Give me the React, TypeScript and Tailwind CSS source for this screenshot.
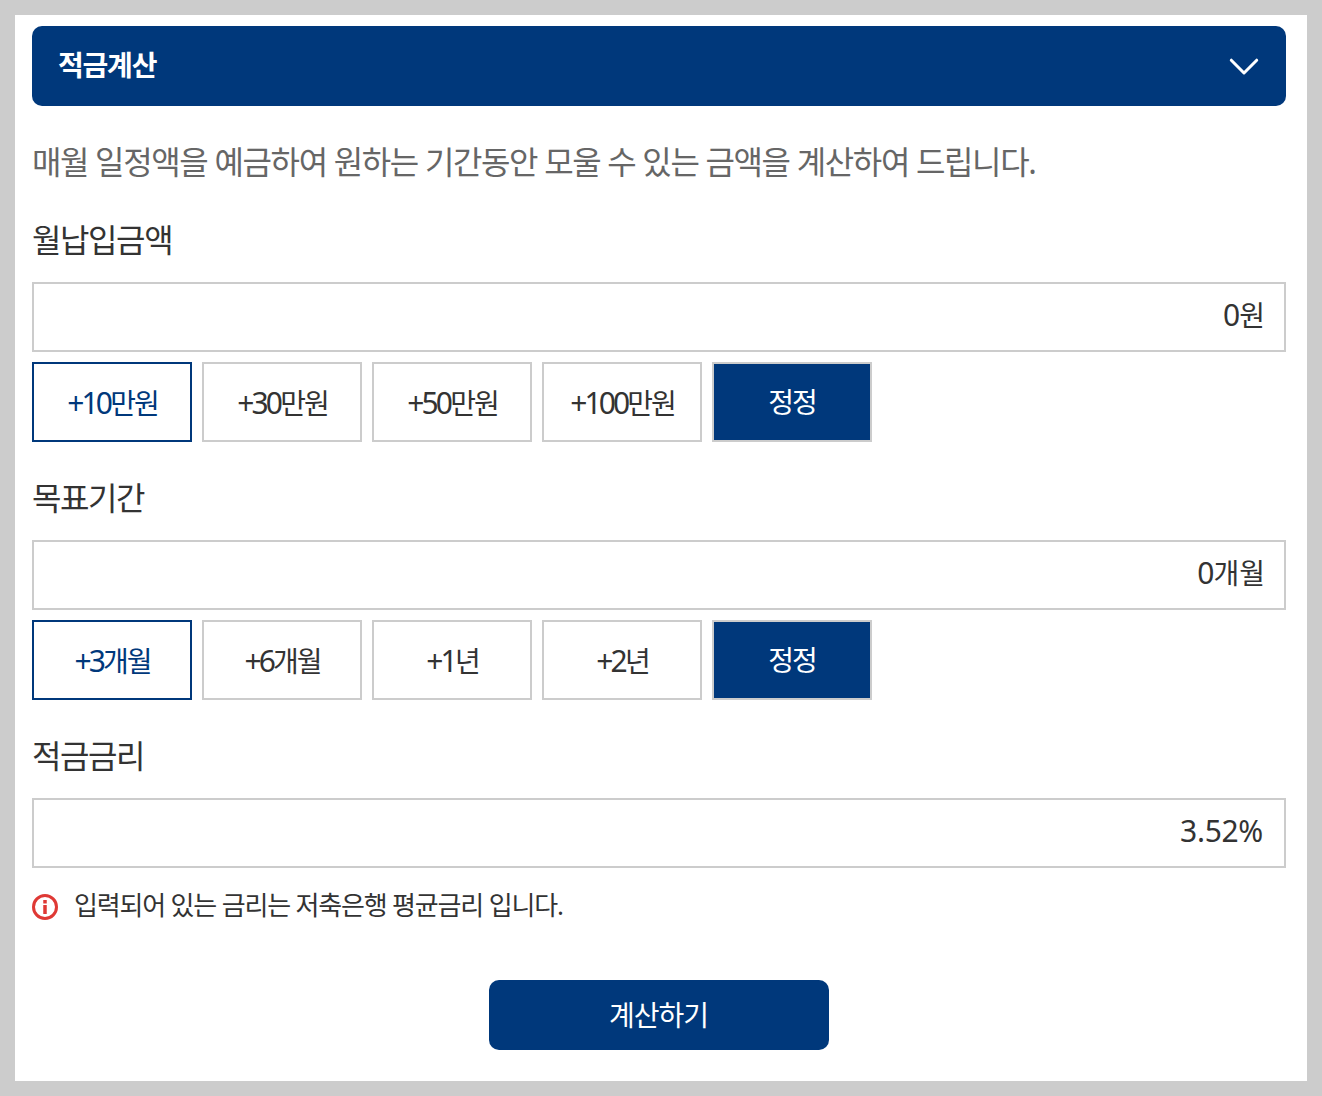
import { useState } from "react";

type FieldProps = {
  label: string;
  amount: string;
  unit?: string;
  options?: { amount: string; unit: string }[];
};

const Field = ({ label, amount, unit, options }: FieldProps) => {
  const [active, setActive] = useState(0);

  return (
    <section>
      <h2 className="h-[68px] pt-[6px] text-[32px] leading-[40px] tracking-[-1.4px] text-[#333]">{label}</h2>
      <div className="flex h-[70px] items-center justify-end border-2 border-[#ccc] pr-[19px] pb-[6px] text-[28px] text-[#333]">
        <span className={unit ? "" : "pr-[2px]"}>
          <span className={unit ? "text-[30px] tracking-[-1px]" : "text-[30px] tracking-[-0.3px]"}>{amount}</span>
          {unit}
        </span>
      </div>
      {options && (
        <div className="mt-[10px] flex gap-[10px]">
          {options.map((option, index) => (
            <button
              key={option.amount}
              type="button"
              onClick={() => setActive(index)}
              className={`h-20 w-40 border-2 pl-[1px] text-[28px] tracking-[-2px] ${
                index === active ? "border-[#00387b] text-[#00387b]" : "border-[#ccc] text-[#333]"
              }`}
            >
              <span className="text-[30px] tracking-[-2.9px]">{option.amount}</span>
              {option.unit}
            </button>
          ))}
          <button type="button" className="h-20 w-40 border-2 border-[#ccc] bg-[#00387b] text-[28px] tracking-[-2px] text-white">
            정정
          </button>
        </div>
      )}
    </section>
  );
};

const amountOptions = [
  { amount: "+10", unit: "만원" },
  { amount: "+30", unit: "만원" },
  { amount: "+50", unit: "만원" },
  { amount: "+100", unit: "만원" },
];

const periodOptions = [
  { amount: "+3", unit: "개월" },
  { amount: "+6", unit: "개월" },
  { amount: "+1", unit: "년" },
  { amount: "+2", unit: "년" },
];

export default function App() {
  return (
    <div className="h-[1096px] w-[1322px] bg-[#ccc] p-[15px] font-['Noto_Sans','Noto_Sans_CJK_KR',sans-serif]">
      <main className="h-[1066px] bg-white pt-[11px] pr-[21px] pl-[17px]">
        <header className="flex h-20 items-center justify-between rounded-[10px] bg-[#00387b] pr-[27px] pl-[26px] text-white">
          <h1 className="pb-[2px] text-[28px] font-bold tracking-[-1.2px]">적금계산</h1>
          <svg className="mt-[2px]" width="30" height="18" viewBox="0 0 30 18" fill="none" stroke="currentColor" strokeWidth="3">
            <path d="M2.3 2.2L15 15 27.7 2.2" strokeLinecap="round" strokeLinejoin="round" />
          </svg>
        </header>
        <p className="mt-[29px] h-[79px] text-[32px] leading-[54px] tracking-[-1.36px] text-[#666]">
          매월 일정액을 예금하여 원하는 기간동안 모울 수 있는 금액을 계산하여 드립니다.
        </p>
        <div className="flex flex-col gap-[30px]">
          <Field label="월납입금액" amount="0" unit="원" options={amountOptions} />
          <Field label="목표기간" amount="0" unit="개월" options={periodOptions} />
          <Field label="적금금리" amount="3.52%" />
        </div>
        <p className="mt-[18px] flex h-[39px] items-center gap-4 text-[26px] tracking-[-1.17px] text-[#333]">
          <svg className="mt-[3px]" width="26" height="26" viewBox="0 0 26 26" fill="none" stroke="#df3935">
            <circle cx="13" cy="13" r="11.5" strokeWidth="3" />
            <path d="M13 11v9" strokeWidth="3.5" />
            <path d="M13 6v3.5" strokeWidth="3.5" />
          </svg>
          입력되어 있는 금리는 저축은행 평균금리 입니다.
        </p>
        <button type="button" className="mx-auto mt-[55px] block h-[70px] w-[340px] rounded-[10px] bg-[#00387b] pr-[1px] text-[28px] tracking-[-1px] text-white">
          계산하기
        </button>
      </main>
    </div>
  );
}
